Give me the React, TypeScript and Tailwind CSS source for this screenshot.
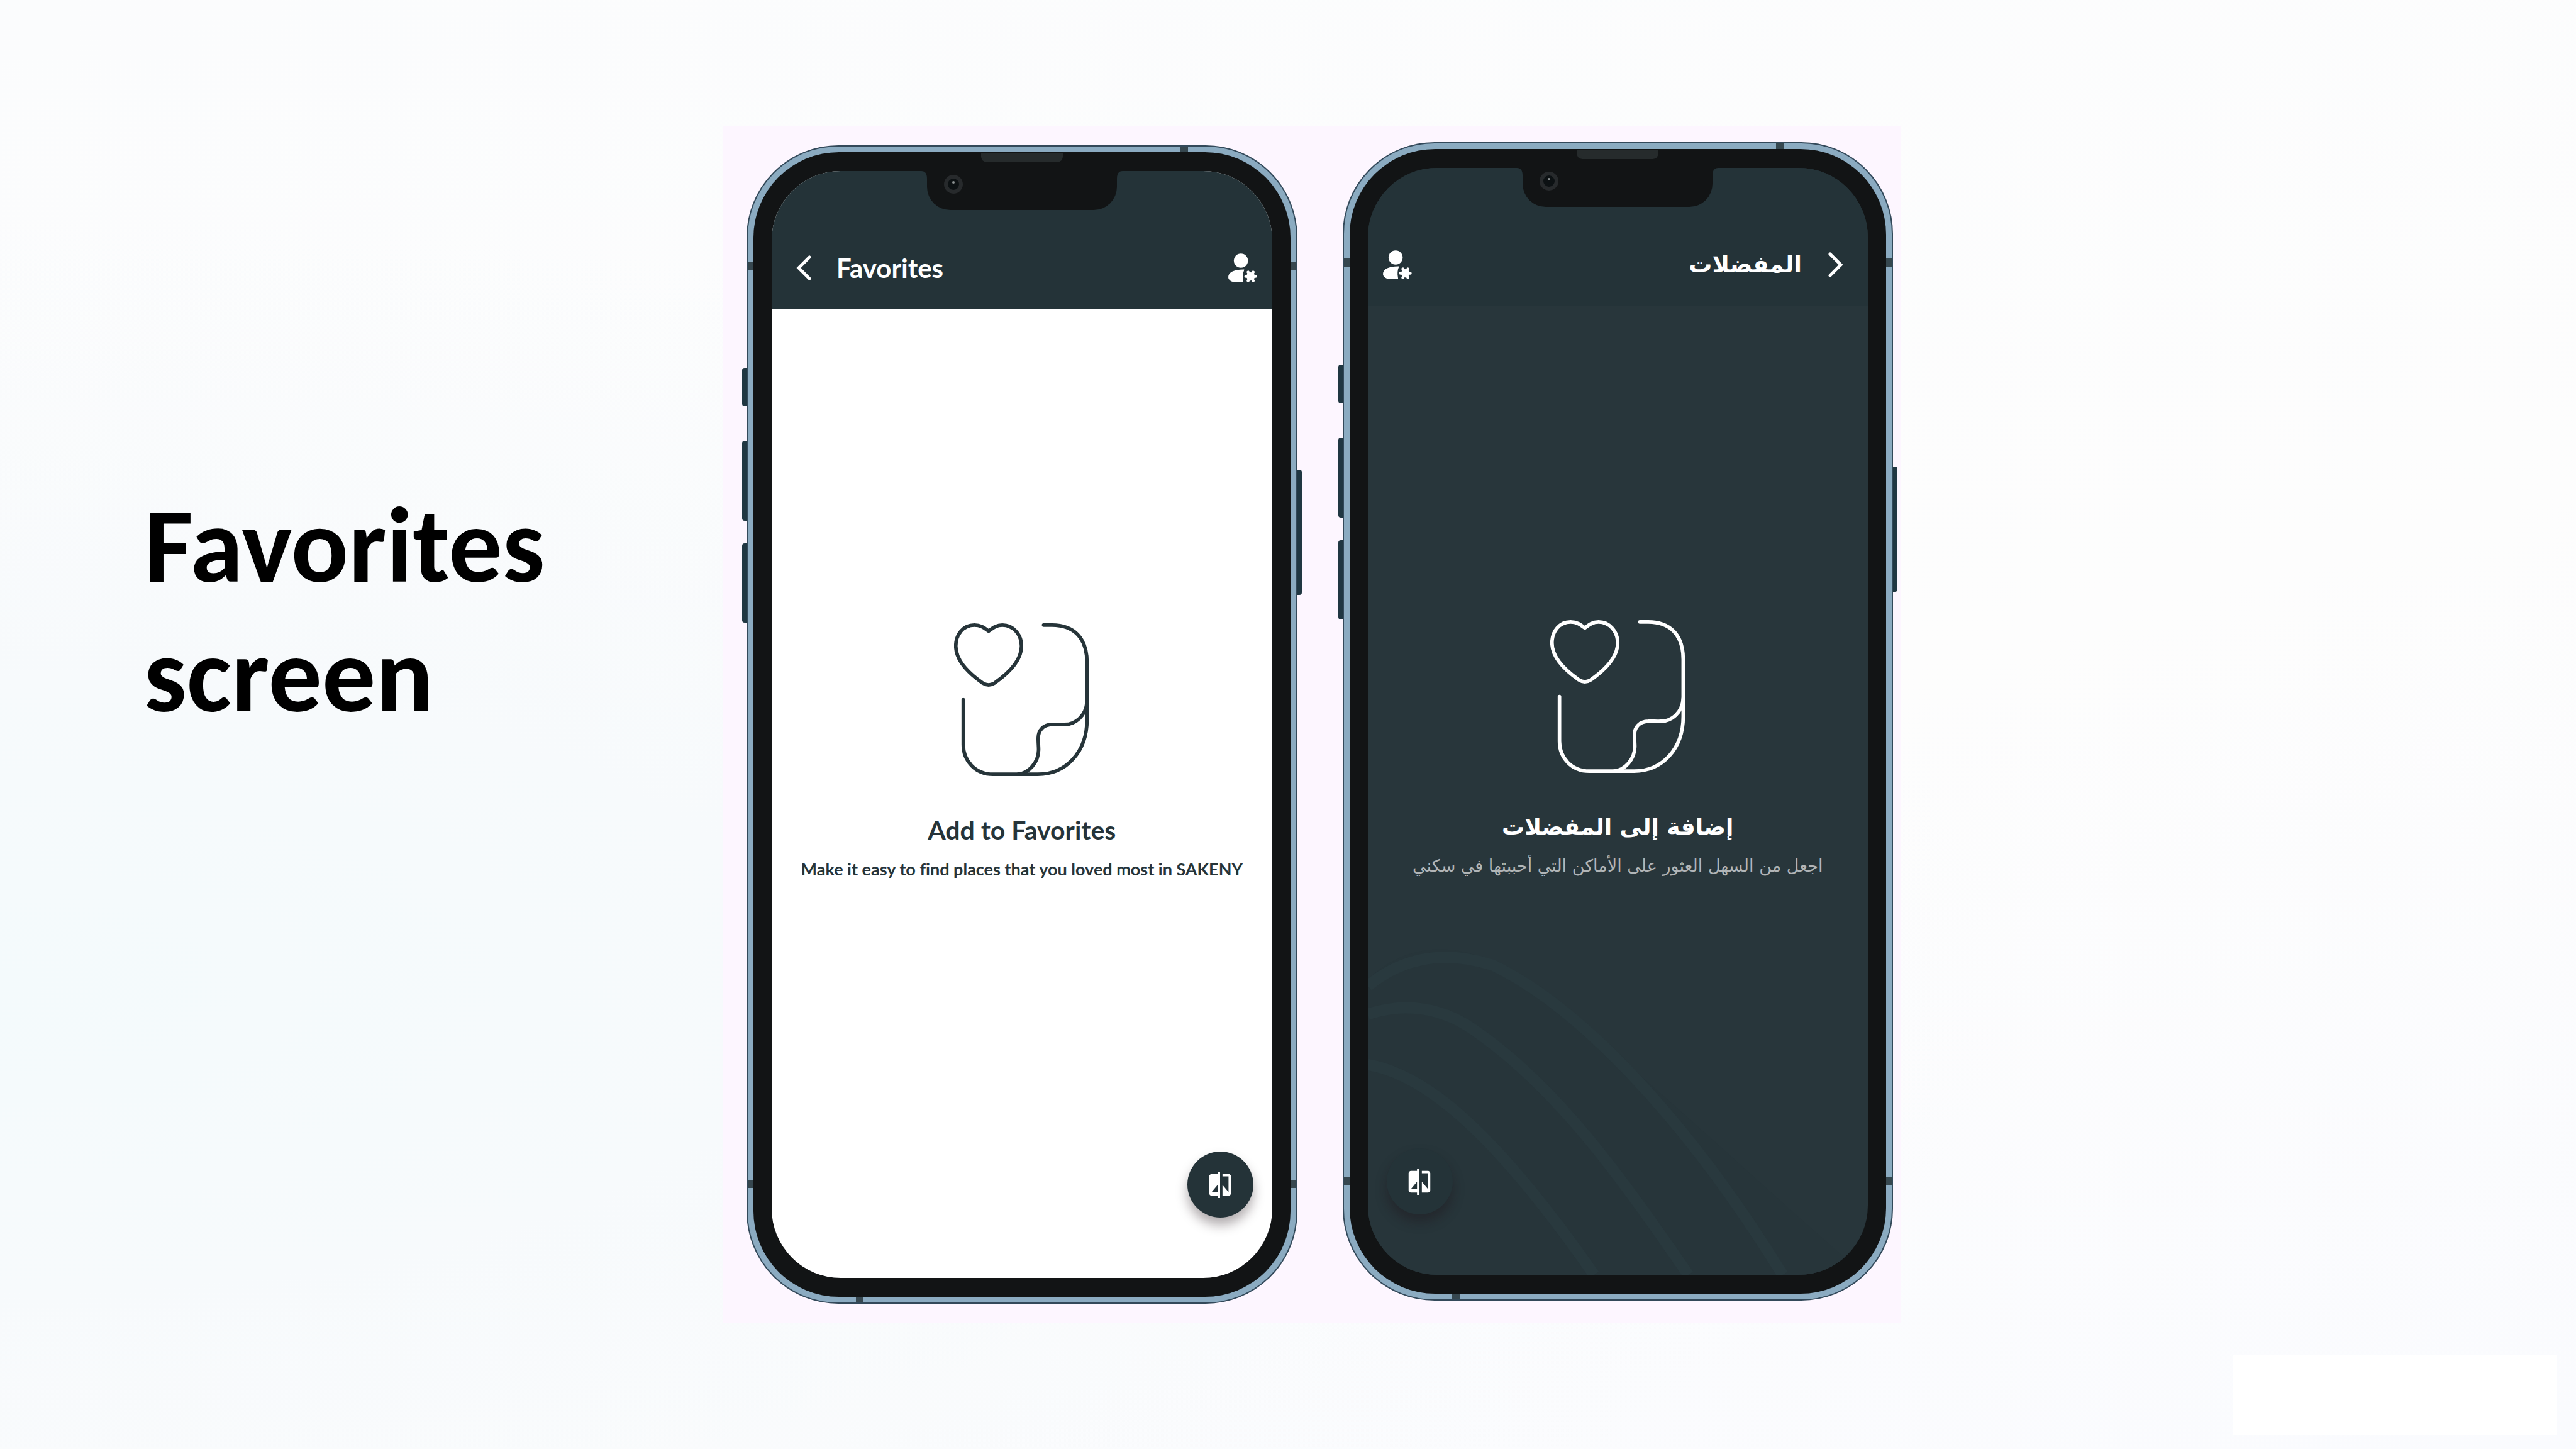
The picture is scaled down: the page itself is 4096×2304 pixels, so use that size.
import React from "react";

type ScreenProps = {
  title: string;
  heading: string;
  message: string;
  dir: "ltr" | "rtl";
  dark?: boolean;
};

function BackIcon() {
  return (
    <svg viewBox="0 0 24 40" className="h-[40px] w-[24px] rtl:-scale-x-100" fill="none" aria-hidden="true">
      <path d="M21 3 L4 20 L21 37" stroke="currentColor" strokeWidth="5" strokeLinecap="round" strokeLinejoin="miter" />
    </svg>
  );
}

function AccountIcon() {
  return (
    <svg viewBox="0 0 160 160" className="h-[46px] w-[46px]" fill="currentColor" aria-hidden="true">
      <circle cx="70" cy="40" r="39" />
      <path d="M88 89 C38 88 0 103 0 130 C0 149 20 159 46 159 H80 C84 159 84 156 83 150 C79 130 80 108 88 92 Z" />
      <circle cx="124" cy="127" r="23" />
      <path d="M97 127 H151 M110 103 L138 151 M138 103 L110 151" stroke="currentColor" strokeWidth="16" strokeLinecap="round" />
    </svg>
  );
}

function CompareIcon() {
  return (
    <svg viewBox="0 0 24 24" className="h-[46px] w-[46px]" fill="currentColor" aria-hidden="true">
      <path d="M10 3H5c-1.1 0-2 .9-2 2v14c0 1.1.9 2 2 2h5v2h2V1h-2v2zm0 15H5l5-6v6zm9-15h-5v2h5v13l-5-6v9h5c1.1 0 2-.9 2-2V5c0-1.1-.9-2-2-2z" />
    </svg>
  );
}

function FavoriteNoteIcon() {
  return (
    <svg
      viewBox="232 180 756 856"
      className="h-[243px] w-[215px]"
      fill="none"
      stroke="currentColor"
      strokeWidth="20"
      strokeLinecap="round"
      strokeLinejoin="round"
      aria-hidden="true"
    >
      <path d="M425 224 C398 204 380 190 345 190 C285 190 241 240 241 308 C241 395 320 465 392 515 Q425 536 458 515 C530 465 609 395 609 308 C609 240 560 190 502 190 C470 190 452 204 425 224 Z" />
      <path d="M733 190 H780 C900 190 976 260 976 400 V720 C976 900 860 1026 700 1026 H450 C350 1026 283 950 283 860 V608" />
      <path d="M976 620 C970 700 910 747 850 747 C830 748 800 746 780 747 C730 748 704 780 703 820 C702 845 705 865 705 890 C704 960 650 1020 590 1026" />
    </svg>
  );
}

function Waves() {
  return (
    <svg
      viewBox="0 0 796 1759"
      preserveAspectRatio="none"
      className="absolute inset-0 h-full w-full"
      fill="none"
      stroke="#29393e"
      strokeWidth="18"
      aria-hidden="true"
    >
      <path
        stroke="none"
        fill="#27353a"
        d="M0 1290 C60 1230 150 1225 230 1280 C400 1400 560 1560 790 1759 H0 Z"
      />
      <path d="M0 1300 C60 1250 130 1245 199 1267 C330 1330 500 1500 660 1759" />
      <path d="M0 1345 C60 1325 120 1335 169 1370 C300 1460 400 1600 510 1759" />
      <path d="M0 1425 C90 1440 200 1530 360 1759" />
    </svg>
  );
}

function Screen({ title, heading, message, dir, dark }: ScreenProps) {
  return (
    <div
      dir={dir}
      className={
        dark
          ? "relative flex h-full flex-col overflow-hidden rounded-[110px] bg-[#28363b] text-white"
          : "relative flex h-full flex-col overflow-hidden rounded-[110px] bg-white text-[#263439]"
      }
    >
      {dark && <Waves />}
      <header className="relative flex h-[219px] shrink-0 items-center bg-[#243338] ps-[39px] pe-[24px] pt-[88px] text-white">
        <button type="button" aria-label={dir === "rtl" ? "رجوع" : "Back"} className="flex">
          <BackIcon />
        </button>
        <h2
          className={
            dark
              ? "ms-[42px] font-['DejaVu_Sans',sans-serif] text-[37px] leading-[52px] font-bold"
              : "ms-[40px] font-[Lato,sans-serif] text-[42px] leading-[52px] font-bold"
          }
        >
          {title}
        </h2>
        <button type="button" aria-label={dir === "rtl" ? "الحساب" : "Account"} className="ms-auto flex">
          <AccountIcon />
        </button>
      </header>
      <main className="relative flex flex-1 flex-col items-center pt-[500px]">
        <FavoriteNoteIcon />
        <h3
          className={
            dark
              ? "mt-[60px] font-['DejaVu_Sans',sans-serif] text-[36px] leading-[52px] font-bold whitespace-nowrap"
              : "mt-[60px] font-[Lato,sans-serif] text-[41px] leading-[52px] font-bold whitespace-nowrap"
          }
        >
          {heading}
        </h3>
        <p
          className={
            dark
              ? "mt-[16px] font-['DejaVu_Sans',sans-serif] text-[27px] leading-[40px] whitespace-nowrap text-[#b1b5b7]"
              : "mt-[16px] font-[Lato,sans-serif] text-[27px] leading-[40px] font-bold whitespace-nowrap [font-variant-ligatures:none]"
          }
        >
          {message}
        </p>
      </main>
      <button
        type="button"
        aria-label={dir === "rtl" ? "مقارنة" : "Compare"}
        className="absolute end-[30px] bottom-[96px] flex h-[105px] w-[105px] items-center justify-center rounded-full bg-[#243338] text-white shadow-[0_12px_18px_rgba(30,15,20,0.34)]"
      >
        <CompareIcon />
      </button>
    </div>
  );
}

function Phone({ children }: { children: React.ReactNode }) {
  return (
    <div className="relative aspect-[875/1841] min-w-0 flex-1">
      <span className="absolute top-[354px] -left-[7px] h-[61px] w-[12px] rounded-[4px] bg-[#203742]" />
      <span className="absolute top-[470px] -left-[7px] h-[127px] w-[12px] rounded-[4px] bg-[#203742]" />
      <span className="absolute top-[633px] -left-[7px] h-[126px] w-[12px] rounded-[4px] bg-[#203742]" />
      <span className="absolute top-[516px] -right-[7px] h-[199px] w-[12px] rounded-[4px] bg-[#203742]" />
      <div className="relative h-full overflow-hidden rounded-[146px] border-2 border-[#33495a] bg-[#8babc1] p-[9px]">
        <span className="absolute top-0 right-[172px] h-[12px] w-[12px] bg-[#36474f]" />
        <span className="absolute bottom-0 left-[172px] h-[12px] w-[12px] bg-[#36474f]" />
        <span className="absolute top-[183px] left-0 h-[13px] w-full bg-[#36474f]" />
        <span className="absolute bottom-[182px] left-0 h-[13px] w-full bg-[#36474f]" />
        <div className="relative h-full rounded-[136px] bg-[#121415] px-[29px] py-[30px]">
          {children}
          <div className="absolute top-[30px] left-1/2 h-[62px] w-[302px] -translate-x-1/2 rounded-b-[37px] bg-[#121415]">
            <svg viewBox="0 0 9 12" className="absolute top-0 -left-[9px] h-[12px] w-[9px]" fill="#121415" aria-hidden="true">
              <path d="M0 0 H9 V12 C9 4 6 0 0 0 Z" />
            </svg>
            <svg viewBox="0 0 9 12" className="absolute top-0 -right-[9px] h-[12px] w-[9px]" fill="#121415" aria-hidden="true">
              <path d="M9 0 H0 V12 C0 4 3 0 9 0 Z" />
            </svg>
            <span className="absolute top-[6px] left-[27px] flex h-[30px] w-[30px] justify-center rounded-full border-[6px] border-[#272a2c] bg-[#0c1113] pt-[4px]">
              <span className="h-[4px] w-[4px] rounded-full bg-[#8d9293]" />
            </span>
          </div>
          <span className="absolute top-[2px] left-1/2 h-[14px] w-[130px] -translate-x-1/2 rounded-b-[9px] bg-[#262b2c]" />
        </div>
      </div>
    </div>
  );
}

export default function App() {
  return (
    <div className="relative grid min-h-screen grid-cols-[1150fr_1872fr_1074fr] items-start bg-[#fbfcfd] bg-[radial-gradient(ellipse_at_0%_68%,#f4fafc_0%,#f7fafc_22%,transparent_55%),linear-gradient(165deg,#fbfcfd_0%,#fdfdfd_55%,#fafbfe_100%)]">
      <h1 className="pt-[764px] pl-[229px] font-[Carlito,Lato,sans-serif] text-[170px] leading-[206px] font-bold text-black">
        Favorites
        <br />
        screen
      </h1>
      <section className="mt-[201px] flex items-start gap-[72px] bg-[#fdf6ff] pt-[25px] pr-[12px] pb-[31px] pl-[37px]">
        <div className="flex min-w-0 flex-1 pt-[5px]">
          <Phone>
            <Screen
              dir="ltr"
              title="Favorites"
              heading="Add to Favorites"
              message="Make it easy to find places that you loved most in SAKENY"
            />
          </Phone>
        </div>
        <div className="flex min-w-0 flex-1">
          <Phone>
            <Screen
              dir="rtl"
              dark
              title="المفضلات"
              heading="إضافة إلى المفضلات"
              message="اجعل من السهل العثور على الأماكن التي أحببتها في سكني"
            />
          </Phone>
        </div>
      </section>
      <div className="absolute right-[30px] bottom-[22px] h-[127px] w-[516px] bg-white" />
    </div>
  );
}
